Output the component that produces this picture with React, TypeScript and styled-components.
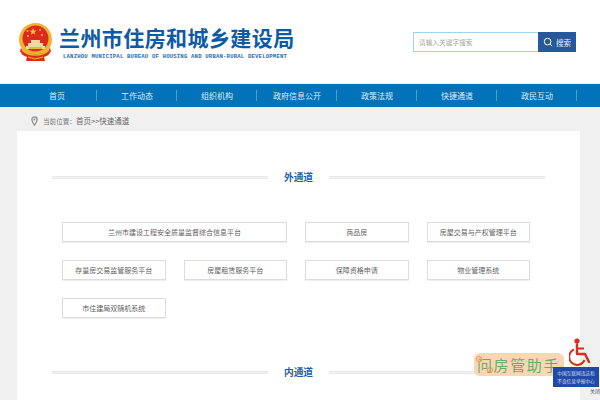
import React from "react";
import styled, { createGlobalStyle } from "styled-components";

const Global = createGlobalStyle`
  html, body { margin: 0; padding: 0; width: 600px; height: 400px; overflow: hidden; background: #f0f0f0; }
  * { box-sizing: border-box; }
  body { font-family: "Noto Sans CJK SC", "Liberation Sans", sans-serif; }
`;
const Page = styled.div`width: 600px; height: 400px; overflow: hidden; position: relative; display: flex; flex-direction: column;`;
const Header = styled.header`height: 83px; background: #fff; display: flex; align-items: flex-start; justify-content: space-between; padding: 23px 24px 0 18px; flex: none;`;
const Brand = styled.div`display: flex; align-items: flex-start; gap: 5px;`;
const BrandText = styled.div`display: flex; flex-direction: column;`;
const Title = styled.h1`margin: 0; font-size: 21px; line-height: 28px; height: 28px; font-weight: 700; color: #0d5aa5; letter-spacing: 0.42px; white-space: nowrap;`;
const Sub = styled.div`font-family: "Liberation Mono", monospace; font-size: 5.6px; line-height: 8px; font-weight: 700; color: #2b6cae; letter-spacing: 0.2px; white-space: nowrap; padding-left: 4px; margin-top: 2px;`;
const Search = styled.form`display: flex; width: 163px; height: 20px; margin: 9px 0 0; border: 1px solid #a3d3ec; border-right: 0;`;
const SearchInput = styled.div`flex: 1; font-size: 6.7px; line-height: 18px; color: #a6a6a6; padding-left: 5px; background: #fff;`;
const SearchBtn = styled.div`width: 38px; height: 20px; margin-top: -1px; background: #27589c; color: #e8edf5; font-size: 7.5px; display: flex; align-items: center; justify-content: center; gap: 3px;`;
const Nav = styled.nav`height: 24px; background: #0272b9; display: flex; padding: 0 23px 0 17px; flex: none; border-top: 1px solid #e4eef5;`;
const NavItem = styled.div`flex: 1; display: flex; align-items: center; justify-content: center; color: #dcebf5; font-size: 8px; position: relative;
  &::after { content: ""; position: absolute; right: 0; top: 6px; height: 11px; width: 1px; background: #4c9ccf; }`;
const Crumb = styled.div`height: 24px; flex: none; display: flex; align-items: center; padding: 3px 0 0 31px; gap: 5px; font-size: 7.5px; color: #666; white-space: nowrap;`;
const CrumbLead = styled.span`font-size: 6.6px; color: #777;`;
const Card = styled.main`flex: 1; margin: 0 20px 0 17px; background: #fff; padding: 35px 35px 0; display: flex; flex-direction: column;`;
const Heading = styled.div`display: flex; align-items: center; height: 22px; gap: 16px;`;
const Rule = styled.div`flex: 1; height: 3px; border-top: 1px solid #e6e6e6; border-bottom: 1px solid #e6e6e6; background: #f4f4f4;`;
const HeadText = styled.h2`margin: 0; font-size: 9.700px; font-weight: 700; color: #1a5ea8; white-space: nowrap;`;
const Links = styled.div`display: grid; grid-template-columns: repeat(4, 103.5px); column-gap: 18px; row-gap: 18px; margin: 34px 0 43px 10px;`;
const LinkBtn = styled.div<{ $wide?: boolean }>`height: 20px; border: 1px solid #dcdcdc; box-shadow: 0 1px 0 #eee; display: flex; align-items: center; justify-content: center; font-size: 7px; color: #5f5f5f; white-space: nowrap; ${(p) => p.$wide && "grid-column: span 2;"}`;
const Helper = styled.div`position: absolute; left: 474px; top: 353px; width: 90px; height: 23px; background: #fad6b2; border-radius: 6px; color: #6aab72; font-size: 15px; line-height: 23px; padding-left: 3px; white-space: nowrap; letter-spacing: 1.600px;`;
const Dot = styled.span<{ $x: number; $y: number }>`position: absolute; left: ${(p) => p.$x}px; top: ${(p) => p.$y}px; width: 6px; height: 6px; border: 1.5px solid #f08a5c; border-radius: 50%;`;
const Wheel = styled.svg`position: absolute; left: 569px; top: 338px;`;
const Badge = styled.div`position: absolute; left: 553px; top: 367px; width: 46px; height: 20px; background: #1f4aa8; color: #d5dcf0; font-size: 4.700px; line-height: 8px; text-align: center; padding-top: 2px; white-space: nowrap;`;
const Close = styled.div`position: absolute; left: 590px; top: 387px; font-size: 5px; line-height: 7px; color: #555; white-space: nowrap;`;

const nav = ["首页", "工作动态", "组织机构", "政府信息公开", "政策法规", "快捷通道", "政民互动"];
const links = ["存量房交易监管服务平台", "房屋租赁服务平台", "保障资格申请", "物业管理系统", "市住建局双随机系统"];

const Emblem = () => (
  <svg width="36" height="38" viewBox="0 0 36 38">
    <circle cx="17.5" cy="16.5" r="16.5" fill="#eeb32f" />
    <circle cx="17.5" cy="15.5" r="13" fill="#dd2a1e" />
    <polygon points="15,5 15.9,7.6 18.6,7.6 16.4,9.2 17.2,11.8 15,10.2 12.8,11.8 13.6,9.2 11.4,7.6 14.1,7.6" fill="#f5c63c" />
    <circle cx="9.5" cy="8" r="1" fill="#f5c63c" /><circle cx="22" cy="7" r="1" fill="#f5c63c" />
    <circle cx="24" cy="12" r="1" fill="#f5c63c" /><circle cx="10" cy="13" r="1" fill="#f5c63c" />
    <path d="M8 26h19v-3h-2v-3h-3v-3H13v3h-3v3H8z" fill="#f3d9a0" />
    <path d="M11 24h13v2H11z" fill="#e9b83a" />
    <path d="M3 25c3 5 8 6 14.500 6s11.500-1 14.500-6l1 3c-2 4-4 5-7 6l1 4h-19l1-4c-3-1-5-2-7-6z" fill="#d92d1e" />
    <path d="M4 27c4 4 8 5 13.500 5s9.500-1 13.500-5" fill="none" stroke="#eeb32f" strokeWidth="1.600" />
    <path d="M10 34l7 2 8-2" fill="none" stroke="#eeb32f" strokeWidth="1.200" />
  </svg>
);

const SearchIcon = () => (
  <svg width="10" height="10" viewBox="0 0 24 24" fill="none" stroke="#fff" strokeWidth="2.400">
    <circle cx="11" cy="11" r="8" /><path d="M17 17l5 5" />
  </svg>
);

const Pin = () => (
  <svg width="7" height="10" viewBox="0 0 8 12" fill="none">
    <path d="M4 11C2 8 .8 6.300 .8 4.200a3.200 3.200 0 0 1 6.400 0C7.200 6.300 6 8 4 11z" stroke="#888" strokeWidth="1.400" />
    <circle cx="4" cy="4.200" r="1.100" fill="#888" />
  </svg>
);

const WheelIcon = () => (
  <Wheel width="24" height="30" viewBox="0 0 24 30" fill="none">
    <circle cx="8" cy="3" r="2.600" fill="#dc2b1c" />
    <path d="M8 6.500V16h8l4 8" stroke="#dc2b1c" strokeWidth="2.400" strokeLinecap="round" strokeLinejoin="round" />
    <path d="M8 10.500h7" stroke="#dc2b1c" strokeWidth="2" />
    <path d="M5 11.500a8 8 0 1 0 10.500 10.500" stroke="#dc2b1c" strokeWidth="2" />
  </Wheel>
);

export default function App() {
  return (
    <Page>
      <Global />
      <Header>
        <Brand>
          <Emblem />
          <BrandText>
            <Title>兰州市住房和城乡建设局</Title>
            <Sub>LANZHOU MUNICIPAL BUREAU OF HOUSING AND URBAN-RURAL DEVELOPMENT</Sub>
          </BrandText>
        </Brand>
        <Search>
          <SearchInput>请输入关键字搜索</SearchInput>
          <SearchBtn><SearchIcon />搜索</SearchBtn>
        </Search>
      </Header>
      <Nav>
        {nav.map((n) => <NavItem key={n}>{n}</NavItem>)}
      </Nav>
      <Crumb>
        <Pin />
        <span><CrumbLead>当前位置：</CrumbLead>首页&gt;&gt;快速通道</span>
      </Crumb>
      <Card>
        <Heading><Rule /><HeadText>外通道</HeadText><Rule /></Heading>
        <Links>
          <LinkBtn $wide>兰州市建设工程安全质量监督综合信息平台</LinkBtn>
          <LinkBtn>商品房</LinkBtn>
          <LinkBtn>房屋交易与产权管理平台</LinkBtn>
          {links.map((l) => <LinkBtn key={l}>{l}</LinkBtn>)}
        </Links>
        <Heading><Rule /><HeadText>内通道</HeadText><Rule /></Heading>
      </Card>
      <Helper>问房管助手<Dot $x={2} $y={3} /><Dot $x={13} $y={14} /></Helper>
      <WheelIcon />
      <Badge>中国互联网违法和<br />不良信息举报中心</Badge>
      <Close>关闭</Close>
    </Page>
  );
}
